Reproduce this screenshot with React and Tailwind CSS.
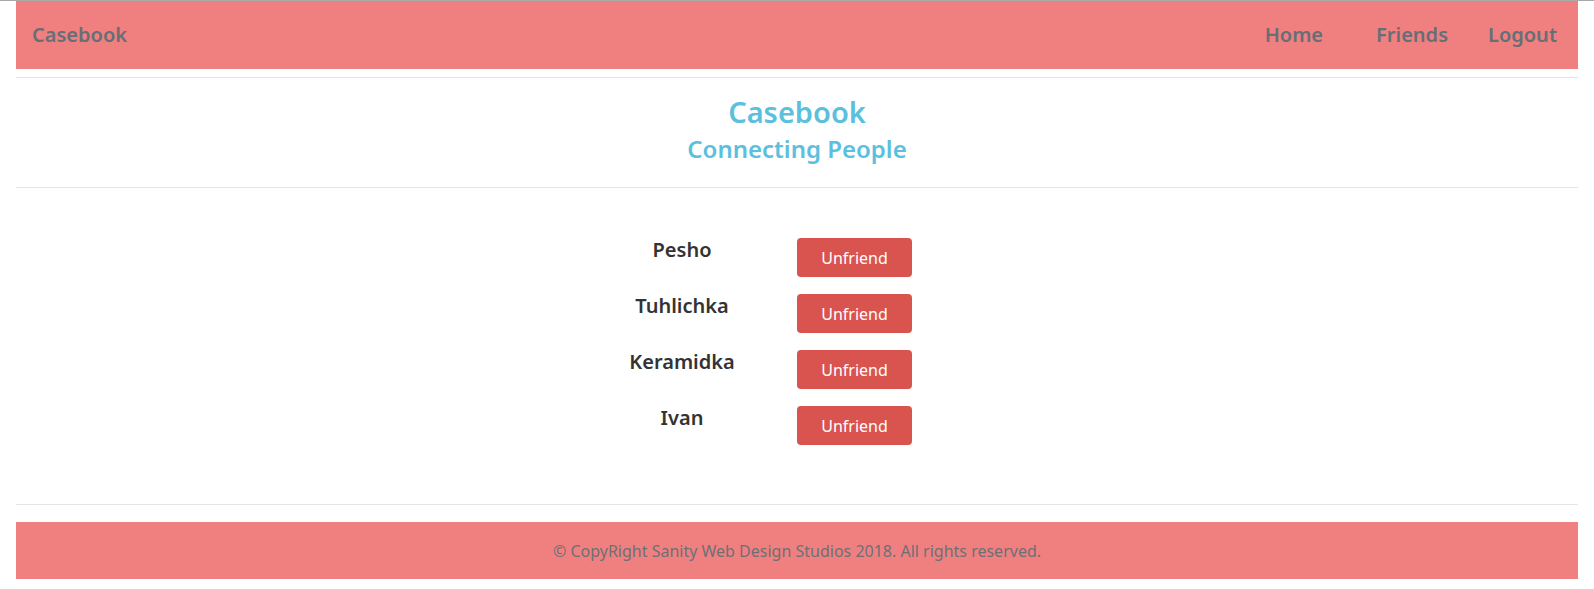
import React from "react";

const friends = ["Pesho", "Tuhlichka", "Keramidka", "Ivan"];

export default function App() {
  return (
    <div
      className="min-h-[589px] bg-white border-t border-[#a9a9a9] px-4"
      style={{ fontFamily: '"Noto Sans", "Open Sans", Arial, sans-serif' }}
    >
      {/* Navbar */}
      <nav className="h-[68px] bg-[#f08080] flex items-center justify-between pl-4 pr-[21px] text-[20px] font-semibold text-[#676e75]">
        <a href="#" className="leading-7">Casebook</a>
        <div className="flex items-center">
          <a href="#" className="leading-7 mr-[53px]">Home</a>
          <a href="#" className="leading-7 mr-[40px]">Friends</a>
          <a href="#" className="leading-7">Logout</a>
        </div>
      </nav>

      <hr className="mt-2 border-[#e5e5e5]" />

      {/* Heading */}
      <header className="flex flex-col items-center pt-[16px] pb-[22px] text-[#5bc0de] font-semibold">
        <h1 className="text-[29px] leading-[35px]">Casebook</h1>
        <h2 className="text-[24px] leading-8 mt-1">Connecting People</h2>
      </header>

      <hr className="border-[#e5e5e5]" />

      {/* Friends list */}
      <main className="pt-[50px] pb-[59px] pl-[551px] flex flex-col gap-[17px]">
        {friends.map((name) => (
          <div key={name} className="flex items-start h-[39px]">
            <h4 className="w-[230px] text-center text-[20px] leading-7 font-semibold text-[#333] -mt-[2px]">
              {name}
            </h4>
            <button className="w-[115px] h-[39px] rounded-[4px] bg-[#d9534f] text-white text-[16px]">
              Unfriend
            </button>
          </div>
        ))}
      </main>

      <hr className="border-[#e5e5e5]" />

      {/* Footer */}
      <footer className="mt-[17px] h-[57px] bg-[#f08080] flex items-center justify-center text-[16px] text-[#6c7075]">
        © CopyRight Sanity Web Design Studios 2018. All rights reserved.
      </footer>
    </div>
  );
}
